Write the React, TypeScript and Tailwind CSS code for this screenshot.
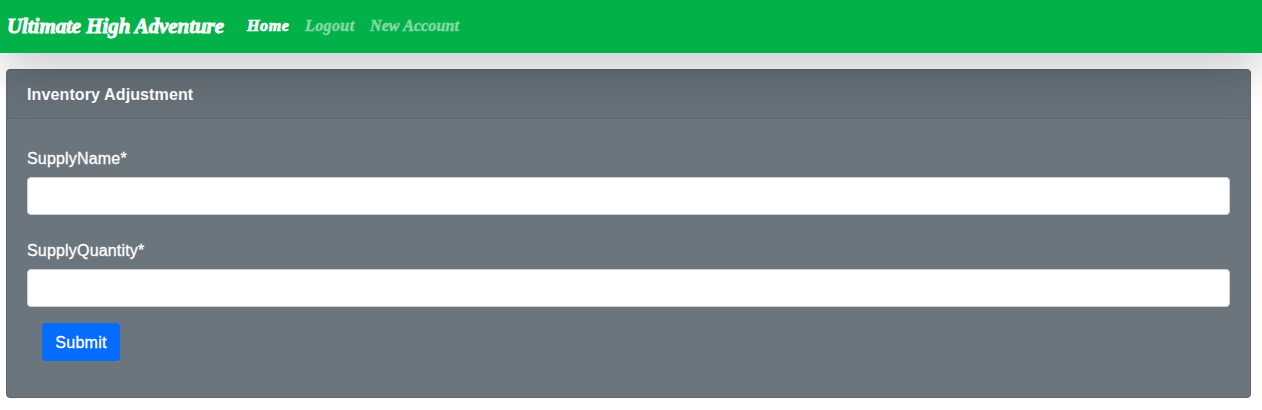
import React from "react";

const links = [
  { label: "Home", className: "w-[43px] text-white tracking-[0.6px] [-webkit-text-stroke:0.7px_white]" },
  { label: "Logout", className: "w-[50px] text-[#81d9a4] tracking-[0.4px] [-webkit-text-stroke:0.5px_#81d9a4]" },
  { label: "New Account", className: "w-[92px] text-[#81d9a4] tracking-[0.1px] [-webkit-text-stroke:0.5px_#81d9a4]" },
];

function Field({ label, id }: { label: string; id: string }) {
  return (
    <div>
      <label
        htmlFor={id}
        className="block h-6 leading-6 tracking-[0.18px] text-white [-webkit-text-stroke:0.3px_white]"
      >
        {label}
      </label>
      <input
        id={id}
        type="text"
        className="mt-[6px] block h-[38px] w-full rounded-[4px] border border-[#ced4da] bg-white px-3 text-[#212529] outline-none"
      />
    </div>
  );
}

export default function App() {
  return (
    <div className="h-[410px] overflow-hidden bg-white font-['Liberation_Sans',sans-serif] text-base">
      <nav className="relative z-10 flex h-[53px] items-center bg-[#02b249] pb-[2px] pl-[7px] font-['Liberation_Serif',serif] font-bold italic whitespace-nowrap shadow-[0_16px_48px_rgba(0,0,0,0.22)]">
        <a className="mr-[22px] w-[218px] text-[21px] leading-[30px] tracking-[-0.07px] text-white [-webkit-text-stroke:0.9px_white]">
          Ultimate High Adventure
        </a>
        <div className="flex gap-[15px] text-base leading-6">
          {links.map((link) => (
            <a key={link.label} className={link.className}>
              {link.label}
            </a>
          ))}
        </div>
      </nav>
      <main className="mt-4 mr-[11px] ml-[6px] h-[329px] rounded-[4px] border border-[#5e666d] bg-[#6b757d]">
        <h1 className="h-[49px] border-b border-[#5e666d] bg-black/[0.03] px-5 leading-[49px] font-bold tracking-[0.12px] text-white">
          Inventory Adjustment
        </h1>
        <form className="px-5 pt-[28px]" onSubmit={(e) => e.preventDefault()}>
          <div className="flex flex-col gap-6">
            <Field label="SupplyName*" id="supply-name" />
            <Field label="SupplyQuantity*" id="supply-quantity" />
          </div>
          <button
            type="submit"
            className="mt-4 ml-[15px] block h-[38px] w-[78px] rounded-[4px] bg-[#066cff] pt-[2px] tracking-[0.25px] text-white [-webkit-text-stroke:0.3px_white]"
          >
            Submit
          </button>
        </form>
      </main>
    </div>
  );
}
